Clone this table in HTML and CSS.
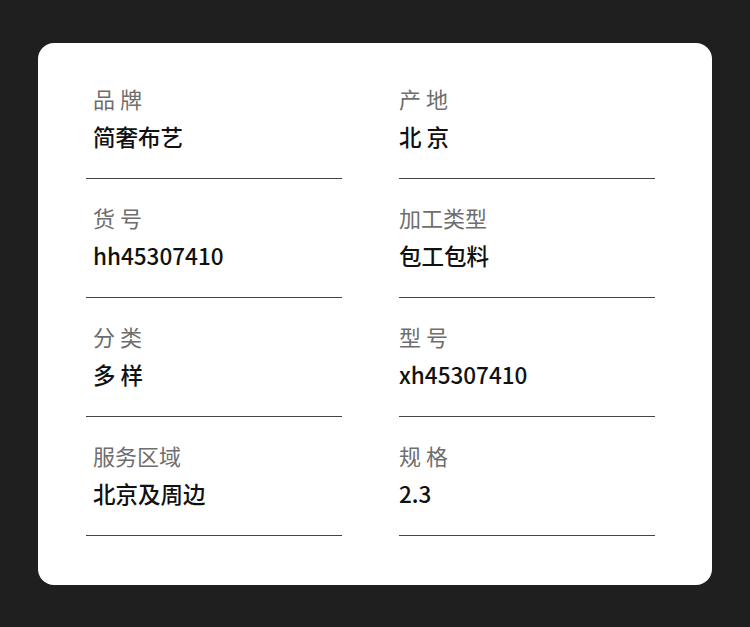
FILE: index.html
```html
<!DOCTYPE html>
<html lang="zh">
<head>
  <meta charset="UTF-8" />
  <meta name="viewport" content="width=device-width, initial-scale=1.0" />
  <title>商品参数</title>
  <link rel="stylesheet" href="styles.css">
</head>
<body>
  <div class="card">
    <div class="spec left">
      <div class="label">品 牌</div>
      <div class="value">简奢布艺</div>
    </div>
    <div class="spec">
      <div class="label">产 地</div>
      <div class="value">北 京</div>
    </div>
    <div class="spec left">
      <div class="label">货 号</div>
      <div class="value">hh45307410</div>
    </div>
    <div class="spec">
      <div class="label">加工类型</div>
      <div class="value">包工包料</div>
    </div>
    <div class="spec left">
      <div class="label">分 类</div>
      <div class="value">多 样</div>
    </div>
    <div class="spec">
      <div class="label">型 号</div>
      <div class="value">xh45307410</div>
    </div>
    <div class="spec left">
      <div class="label">服务区域</div>
      <div class="value">北京及周边</div>
    </div>
    <div class="spec">
      <div class="label">规 格</div>
      <div class="value">2.3</div>
    </div>
  </div>
</body>
</html>
```

FILE: styles.css
```css
body {
  margin: 0;
  background: #1f1f1f;
  font-family: "Noto Sans CJK SC", "Noto Sans", sans-serif;
}

.card {
  margin: 43px 0 0 38px;
  width: 674px;
  height: 542px;
  box-sizing: border-box;
  padding: 17px 57px 0 48px;
  background: #fff;
  border-radius: 16px;
  display: grid;
  grid-template-columns: 256px 256px;
  column-gap: 57px;
  align-content: start;
}

.spec {
  padding: 23px 0 27px;
  border-bottom: 1px solid #444;
}

.spec.left {
  padding-left: 7px;
}

.label {
  font-size: 22px;
  line-height: 30px;
  color: #6e6e6e;
}

.value {
  margin-top: 8px;
  font-size: 22.5px;
  line-height: 30px;
  font-weight: 500;
  color: #111;
}
```
